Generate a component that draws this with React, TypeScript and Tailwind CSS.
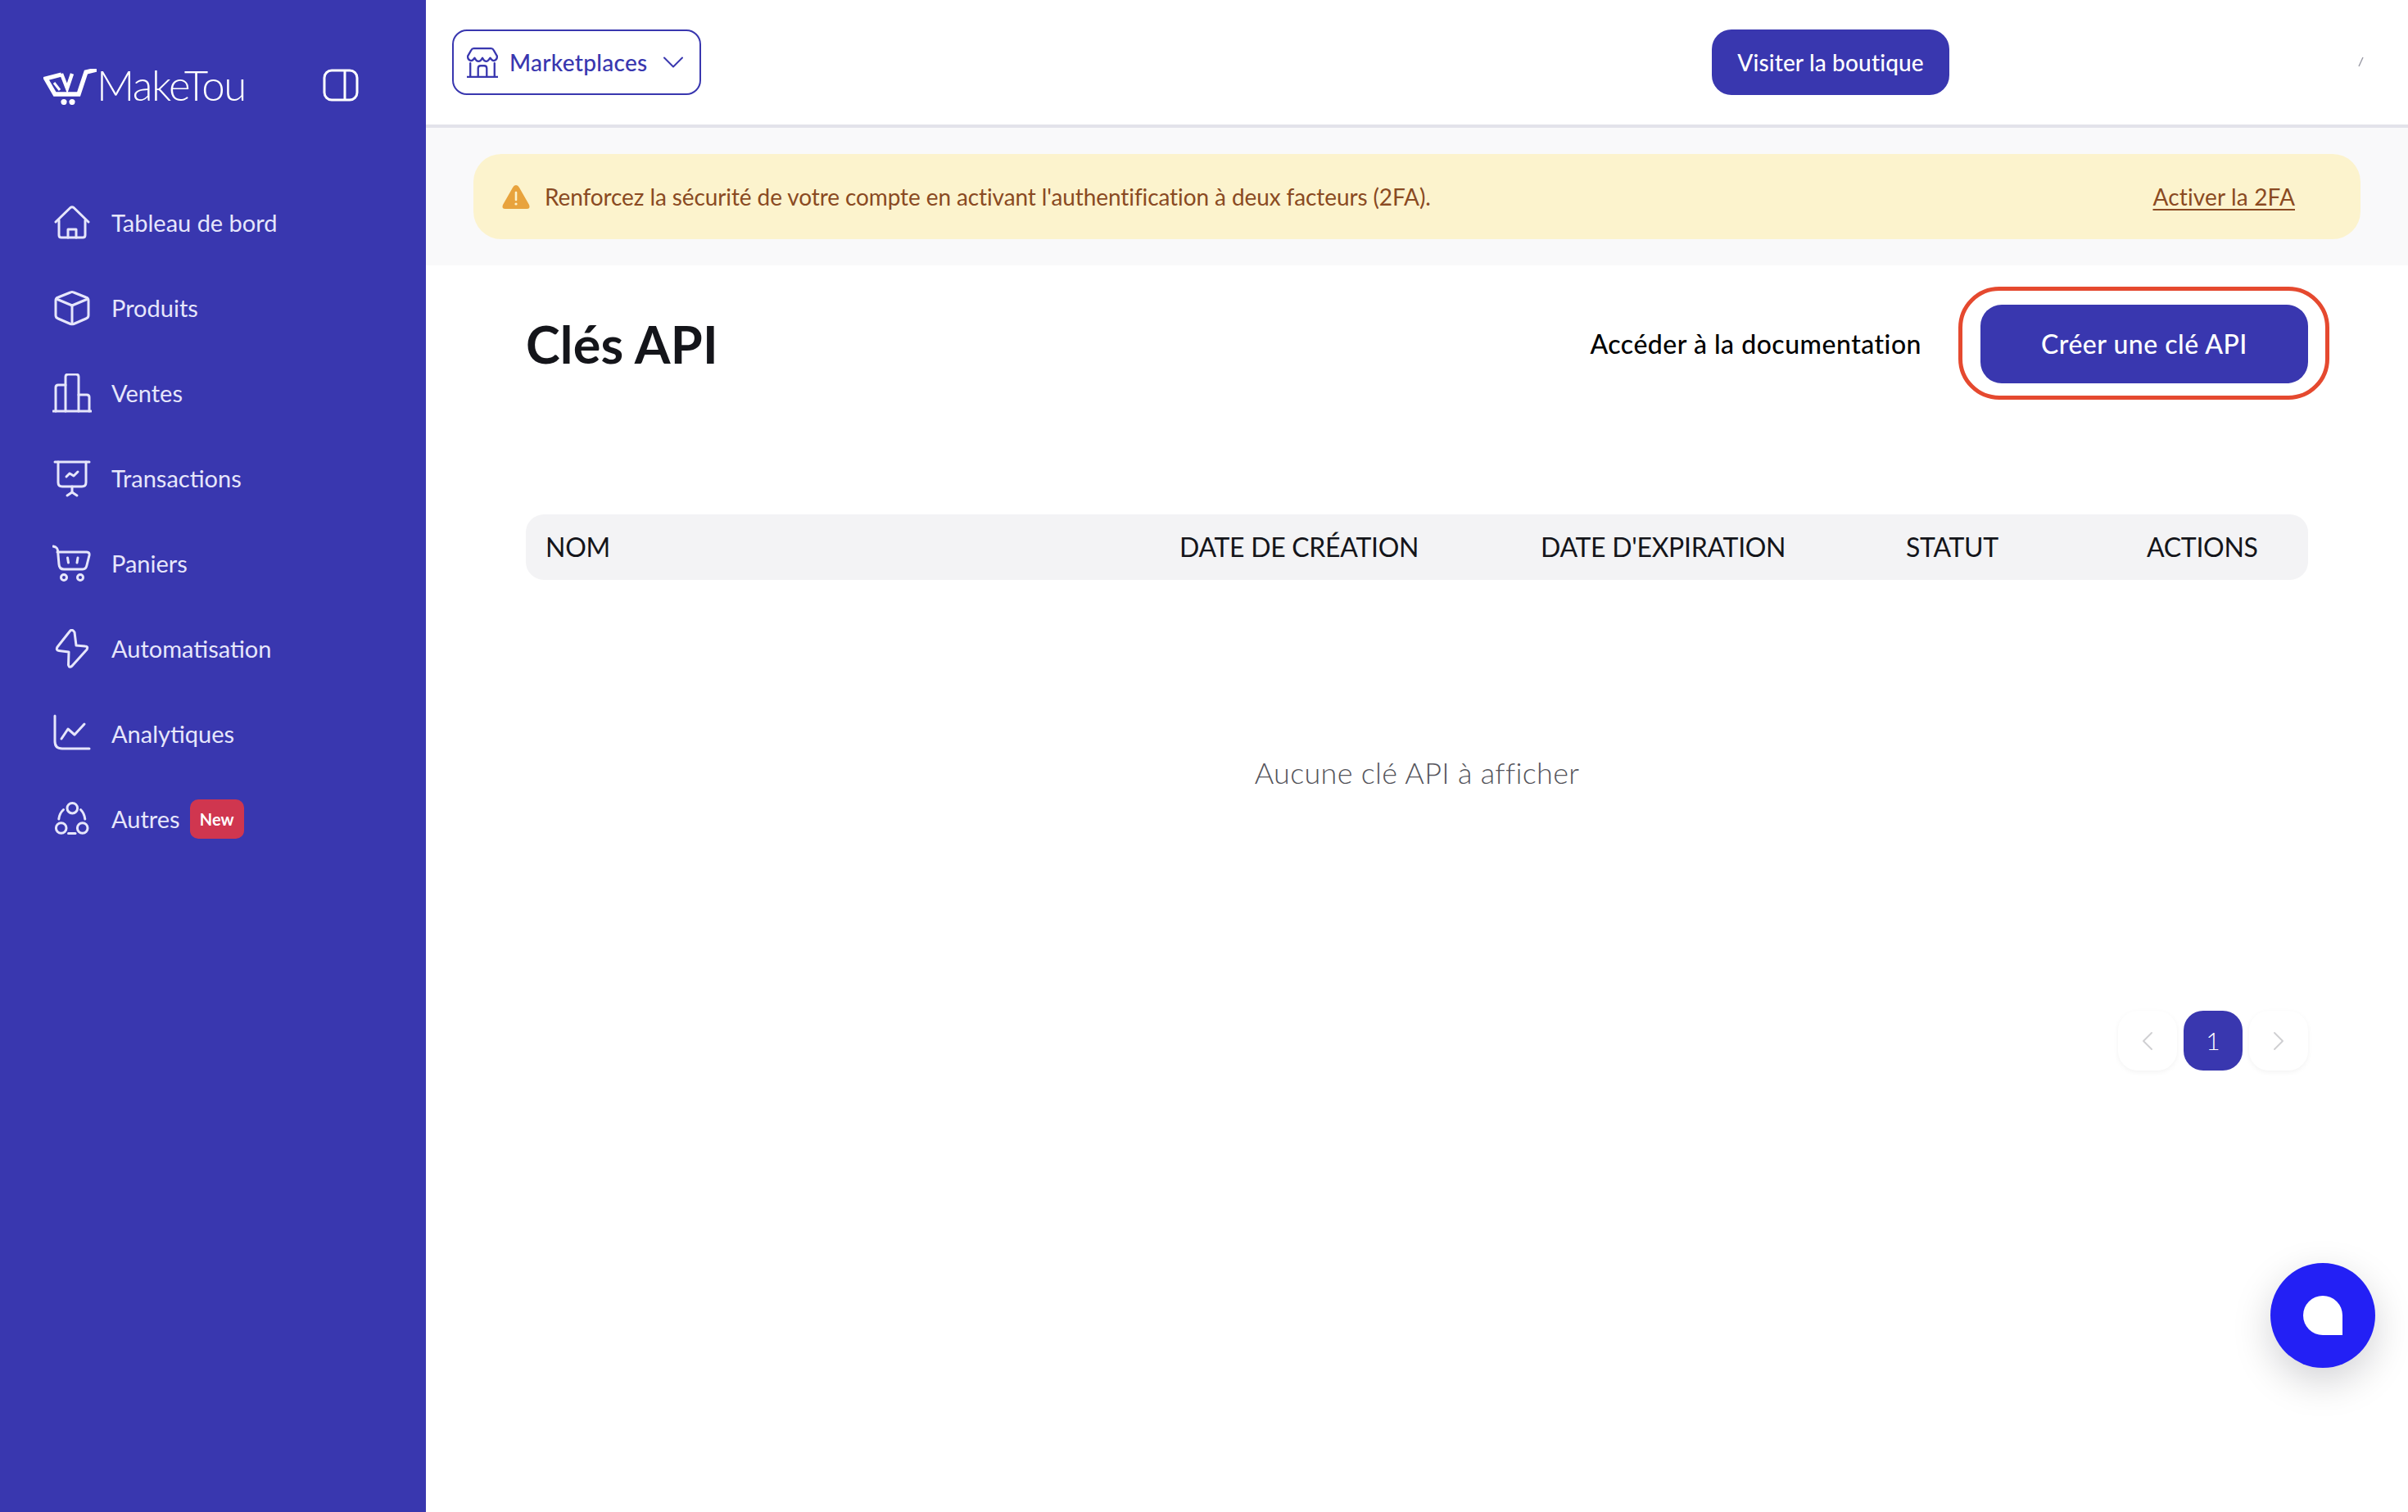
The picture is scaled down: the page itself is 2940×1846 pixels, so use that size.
import type { ReactNode } from 'react';
import { ChevronLeft, ChevronRight, ChevronDown } from 'lucide-react';

const stroke = {
  fill: 'none',
  stroke: 'currentColor',
  strokeWidth: 3,
  strokeLinecap: 'round' as const,
  strokeLinejoin: 'round' as const,
};

const Icon = ({ children }: { children: ReactNode }) => (
  <svg viewBox="0 0 48 48" className="w-[48px] h-[48px] shrink-0" {...stroke}>
    {children}
  </svg>
);

const navItems: { label: string; badge?: string; icon: ReactNode }[] = [
  {
    label: 'Tableau de bord',
    icon: (
      <Icon>
        <path d="M4 23 L22 5.5 Q24 4 26 5.5 L44 23" />
        <path d="M8 21 V39 Q8 42 11 42 H37 Q40 42 40 39 V21" />
        <path d="M19 42 V32 H29 V42" />
      </Icon>
    ),
  },
  {
    label: 'Produits',
    icon: (
      <Icon>
        <path d="M22 5 Q24 4 26 5 L41 11 Q44 12 44 15 V33 Q44 36 41 37 L26 43.5 Q24 44 22 43.5 L7 37 Q4 36 4 33 V15 Q4 12 7 11 Z" />
        <path d="M5 13 L24 21 L43 13" />
        <path d="M24 21 V43" />
      </Icon>
    ),
  },
  {
    label: 'Ventes',
    icon: (
      <Icon>
        <path d="M1 46 H47" />
        <path d="M4 46 V17 Q4 14 7 14 H16" />
        <path d="M16 46 V4 Q16 1 19 1 H29 Q32 1 32 4 V46" />
        <path d="M32 26 H42 Q45 26 45 29 V46" />
      </Icon>
    ),
  },
  {
    label: 'Transactions',
    icon: (
      <Icon>
        <path d="M3 4 H45" />
        <path d="M7 4 V29 Q7 34 12 34 H36 Q41 34 41 29 V4" />
        <path d="M24 34 V41" />
        <path d="M18 45 L24 41 L30 45" />
        <path d="M17 22 L21 18 L26 21 L31 16" />
      </Icon>
    ),
  },
  {
    label: 'Paniers',
    icon: (
      <Icon>
        <path d="M1 3 L4 4 Q6 5 6.5 8 L8 25 Q8.5 31 14 31 H37 Q41 31 42 26 L45 14 Q45.5 10 42 10 H6" />
        <path d="M18.5 17 L19.5 23" />
        <path d="M31 17 L30 23" />
        <circle cx="14" cy="41" r="3.5" />
        <circle cx="34" cy="41" r="3.5" />
      </Icon>
    ),
  },
  {
    label: 'Automatisation',
    icon: (
      <Icon>
        <path d="M21 3 L6 22 Q4 26 8 26.5 L20 28 L19.5 44 Q20.5 48 24 45 L42 25 Q44 21 40 21 L29 20 L27 4 Q24 -1 21 3 Z" />
      </Icon>
    ),
  },
  {
    label: 'Analytiques',
    icon: (
      <Icon>
        <path d="M3 2 V33 Q3 42 12 42 H45" />
        <path d="M11 30 L19 18 L27 25 L39 12" />
      </Icon>
    ),
  },
  {
    label: 'Autres',
    badge: 'New',
    icon: (
      <Icon>
        <circle cx="24.3" cy="10.7" r="6.3" />
        <circle cx="10.7" cy="35" r="6.3" />
        <circle cx="36.7" cy="35" r="6.3" />
        <path d="M7.8 24 Q8.5 17 13.5 12.5" />
        <path d="M39.8 24 Q39 17 34.5 12.5" />
        <path d="M19.5 41.5 H28" />
      </Icon>
    ),
  },
];

function Sidebar() {
  return (
    <aside className="w-[520px] shrink-0 bg-[#3937af] text-[#e6e6fb]">
      <div className="flex items-start pl-[53px] pt-[84px] h-[220px]">
        <svg viewBox="9 7 65 44" className="w-[65px] h-[44px] shrink-0 text-white" fill="none" stroke="currentColor" strokeWidth="5.4" strokeLinejoin="miter">
          <path d="M31 14 L12 19 L23 38 L52 38 L61 11 L74 8" />
          <path d="M31 13 L38 31 L44 13" strokeWidth="4.4" />
          <path d="M22 24 L29 33" strokeWidth="3" />
          <circle cx="34" cy="47.5" r="3.6" fill="currentColor" stroke="none" />
          <circle cx="44" cy="47.5" r="3.6" fill="currentColor" stroke="none" />
        </svg>
        <span className="-mt-[2px] text-[51px] leading-[44px] font-light text-white tracking-[-1.6px]">MakeTou</span>
        <svg viewBox="0 0 44 40" className="w-[44px] h-[40px] ml-[94px] shrink-0 text-white" fill="none" stroke="currentColor" strokeWidth="3">
          <rect x="2" y="2" width="40" height="36" rx="9" />
          <path d="M27 2 V38" />
        </svg>
      </div>
      <nav className="flex flex-col">
        {navItems.map(item => (
          <div key={item.label} className="flex items-center h-[104px] pl-[64px]">
            {item.icon}
            <span className="ml-[24px] text-[29px]">{item.label}</span>
            {item.badge && (
              <span className="ml-[12px] flex items-center justify-center w-[66px] h-[48px] rounded-[10px] bg-[#d0364f] text-white text-[20px] font-bold">
                {item.badge}
              </span>
            )}
          </div>
        ))}
      </nav>
    </aside>
  );
}

function TopBar() {
  return (
    <header className="relative flex items-center h-[156px] pl-[32px] bg-white border-b-[4px] border-[#e3e3ea]">
      <button className="flex items-center w-[304px] h-[80px] pl-[16px] rounded-[18px] border-[2.5px] border-[#3937af] text-[#3937af]">
        <svg viewBox="0 0 36 36" className="w-[38px] h-[38px] shrink-0" fill="none" stroke="currentColor" strokeWidth="2.2" strokeLinejoin="round" strokeLinecap="round">
          <path d="M0.5 35 H35.5" />
          <path d="M4 19 V35 M32 19 V35" />
          <path d="M8 2 H28 Q30 2 31 4 L35 11 Q35 15 32 16 Q29.5 17 27 13 Q24.5 17 22.5 17 Q20 17 18 13 Q16 17 13.5 17 Q11 17 9 13 Q6.5 17 4 16 Q1 15 1 11 L5 4 Q6 2 8 2 Z" />
          <path d="M13 35 V25 Q13 22 16 22 H20 Q23 22 23 25 V35" />
        </svg>
        <span className="ml-[14px] text-[28px] font-medium tracking-[0.3px]">Marketplaces</span>
        <ChevronDown className="ml-[9px] w-[44px] h-[44px]" strokeWidth={1.1} />
      </button>
      <button className="ml-[1234px] w-[290px] h-[80px] rounded-[24px] bg-[#3937af] text-white text-[28px] font-medium tracking-[0.15px]">
        Visiter la boutique
      </button>
      <svg viewBox="0 0 8 14" className="absolute left-[2359px] top-[68px] w-[8px] h-[14px] text-[#9a9aa5]" fill="none" stroke="currentColor" strokeWidth="1.4">
        <path d="M1 13 L6 2" />
      </svg>
    </header>
  );
}

function Banner() {
  return (
    <div className="h-[168px] bg-[#f9f9fa] pt-[32px] pl-[58px] pr-[58px]">
      <div className="flex items-center h-[104px] pl-[34px] pr-[80px] rounded-[34px] bg-[#fcf3cd] text-[#8a4a22]">
        <svg viewBox="0 0 36 32" className="w-[36px] h-[32px] shrink-0">
          <path d="M18 2 Q20.5 2 22 5 L34 26 Q36 31 31 31 H5 Q0 31 2 26 L14 5 Q15.5 2 18 2 Z" fill="#e8a33d" />
          <path d="M18 11 V20" stroke="#fcf3cd" strokeWidth="2.6" strokeLinecap="round" />
          <circle cx="18" cy="25" r="1.6" fill="#fcf3cd" />
        </svg>
        <span className="ml-[17px] text-[28px] tracking-[-0.1px]">
          Renforcez la sécurité de votre compte en activant l'authentification à deux facteurs (2FA).
        </span>
        <a className="ml-auto text-[28px] underline underline-offset-4 tracking-[0.15px]">Activer la 2FA</a>
      </div>
    </div>
  );
}

const columns = ['NOM', 'DATE DE CRÉATION', "DATE D'EXPIRATION", 'STATUT', 'ACTIONS'];

function ApiKeys() {
  return (
    <section className="pl-[122px] pr-[122px]">
      <div className="flex items-center h-[96px] mt-[48px]">
        <h1 className="text-[63px] font-bold text-[#14151a] tracking-[0.2px]">Clés API</h1>
        <a className="ml-auto text-[32px] font-medium text-black tracking-[0.5px]">Accéder à la documentation</a>
        <div className="relative ml-[72px]">
          <button className="w-[400px] h-[96px] rounded-[26px] bg-[#3937af] text-white text-[32px] font-medium tracking-[0.5px]">
            Créer une clé API
          </button>
          <div className="absolute -left-[27px] -right-[26px] -top-[22px] -bottom-[20px] rounded-[50px] border-[5px] border-[#e5492f]" />
        </div>
      </div>
      <div className="mt-[160px] grid grid-cols-[774px_441px_446px_294px_1fr] items-center h-[80px] pl-[24px] rounded-[22px] bg-[#f3f3f5] text-[32px] text-[#14151a] tracking-[-0.3px]">
        {columns.map(col => (
          <span key={col}>{col}</span>
        ))}
      </div>
      <p className="mt-[208px] text-center text-[36px] font-light text-[#55555c] tracking-[0.3px]">Aucune clé API à afficher</p>
      <div className="mt-[264px] flex justify-end gap-[8px]">
        <button className="flex items-center justify-center w-[72px] h-[73px] rounded-[24px] bg-white shadow-[0_2px_6px_rgba(0,0,0,0.05)] text-[#cfcfd2]">
          <ChevronLeft className="w-[40px] h-[40px]" strokeWidth={1.1} />
        </button>
        <button className="flex items-center justify-center w-[72px] h-[73px] rounded-[24px] bg-[#3937af] text-white text-[30px] font-light">
          1
        </button>
        <button className="flex items-center justify-center w-[72px] h-[73px] rounded-[24px] bg-white shadow-[0_2px_6px_rgba(0,0,0,0.05)] text-[#cfcfd2]">
          <ChevronRight className="w-[40px] h-[40px]" strokeWidth={1.1} />
        </button>
      </div>
    </section>
  );
}

export default function App() {
  return (
    <div className="relative flex h-screen overflow-hidden bg-white font-['Lato',sans-serif]">
      <Sidebar />
      <main className="flex-1 min-w-0">
        <TopBar />
        <Banner />
        <ApiKeys />
      </main>
      <button className="absolute left-[2772px] top-[1542px] flex items-center justify-center w-[128px] h-[128px] rounded-full bg-[#2320f5] shadow-[0_16px_48px_rgba(0,0,20,0.18)]">
        <span className="w-[48px] h-[48px] bg-white rounded-[24px_24px_0_24px]" />
      </button>
    </div>
  );
}
